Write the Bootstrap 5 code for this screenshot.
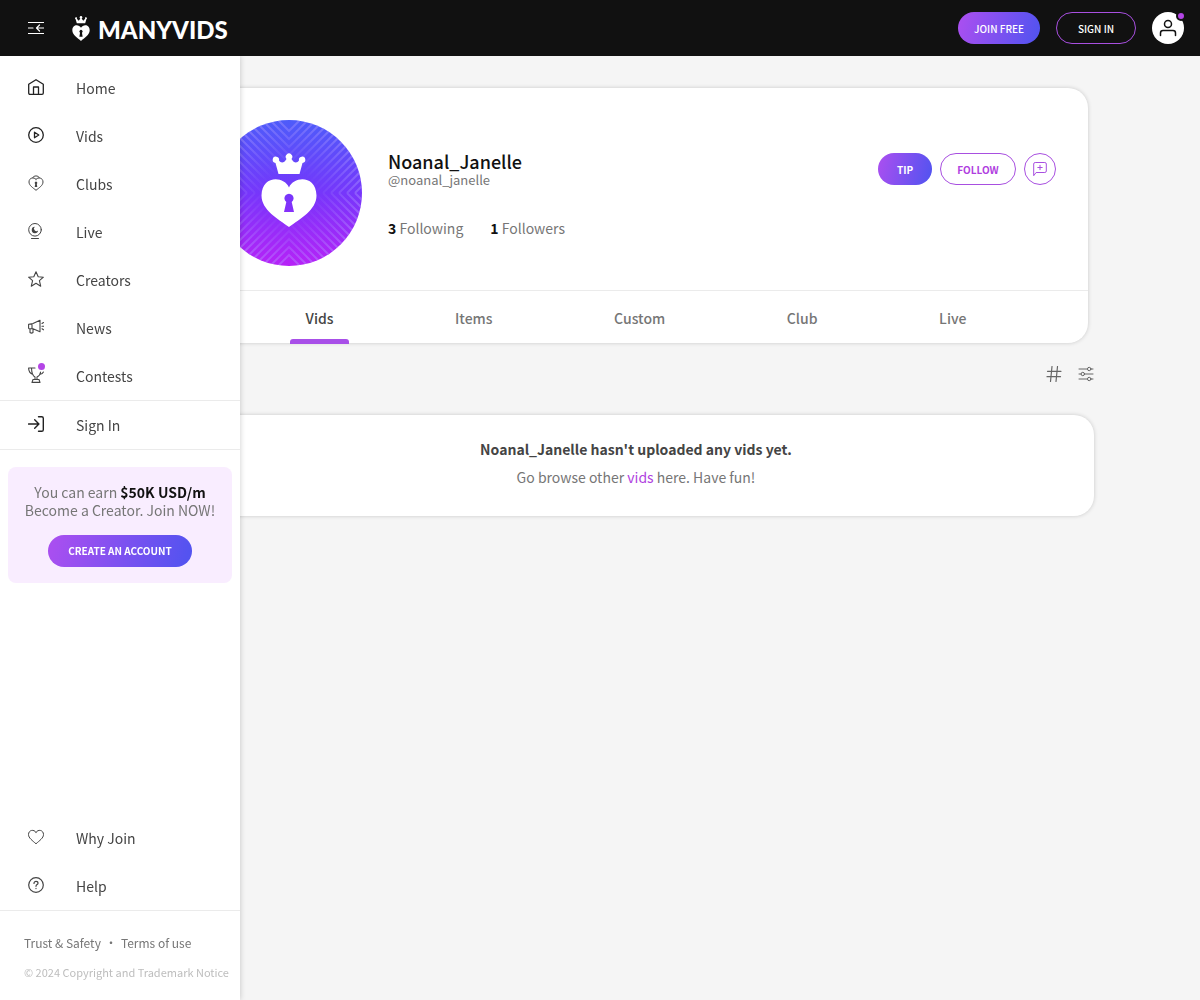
<!DOCTYPE html>
<html lang="en">
<head>
<meta charset="utf-8">
<meta name="viewport" content="width=device-width, initial-scale=1">
<title>Noanal_Janelle - ManyVids</title>
<link href="https://cdn.jsdelivr.net/npm/bootstrap@5.3.0/dist/css/bootstrap.min.css" rel="stylesheet">
<style>
  :root { --mv-purple: #a84fe8; --mv-line: #ebebeb; --mv-grad: linear-gradient(105deg, #a84ff0 5%, #5453f0 95%); }
  body { font-family: "Source Sans Pro", "Noto Sans CJK SC", sans-serif; font-size: 14px; line-height: 20px; color: #767676; background: #f5f5f5; }
  a { text-decoration: none; }
  svg { display: block; flex: none; }
  .line-icon { fill: none; stroke: currentColor; stroke-linecap: round; stroke-linejoin: round; }
  .top-bar { height: 56px; background: #111; z-index: 1040; }
  .menu-btn { margin: 0 20px 0 4px; }
  .brand-link { padding-top: 2px; }
  .brand-word { font: 900 24px/32px Lato, sans-serif; color: #fff; padding-top: 2px; }
  .pill { height: 32px; min-width: 76px; border-radius: 16px; border: 1px solid #a84fe0; font-size: 10px; line-height: 16px; font-weight: 500; padding: 2px 16px 0; }
  .pill-grad { background: var(--mv-grad); border: 0; color: #fff; }
  .pill-grad:hover { color: #fff; }
  .sign-btn { min-width: 80px; }
  .create-btn { min-width: 144px; font-weight: 700; padding-top: 0; }
  .tip-btn { min-width: 54px; }
  .user-btn { width: 32px; height: 32px; border-radius: 50%; background: #fff; color: #111; }
  .alert-dot { position: absolute; width: 7px; height: 7px; top: -4px; right: -1px; border-radius: 50%; background: #b445e6; }
  .user-btn .alert-dot { width: 10px; height: 10px; border: 2px solid #111; top: -1px; right: -2px; }
  .side-menu { position: fixed; top: 56px; bottom: 0; left: 0; width: 240px; background: #fff; box-shadow: 0 0 6px rgba(0,0,0,.2); z-index: 1030; }
  .side-link { height: 48px; padding: 0 28px; gap: 32px; color: #444; }
  .side-link svg { margin-bottom: 2px; }
  .rule-top { border-top: 1px solid var(--mv-line); }
  .rule-bottom { border-bottom: 1px solid var(--mv-line); }
  .promo { margin: 17px 8px 0; padding: 16px 8px; border-radius: 8px; background: #f9edff; line-height: 18px; }
  .promo strong { color: #111; }
  .legal { font-size: 12px; padding: 22px 0 18px 24px; }
  .legal a { color: #767676; }
  .legal .copyright { font-size: 11px; color: #bdbdbd; margin-top: 9px; white-space: nowrap; }
  .page-body { padding: 32px 0 32px 72px; }
  .page-col { max-width: 916px; margin: 0 auto; }
  .panel { background: #fff; border-radius: 20px; box-shadow: 0 0 4px rgba(0,0,0,.18); }
  .profile { margin: 0 6px; }
  .profile-head { padding: 32px 32px 24px; gap: 26px; }
  .info-text { padding-top: 31px; }
  .actions { padding-top: 33px; }
  .profile-name { font-size: 18px; line-height: 20px; font-weight: 500; color: #111; margin: 0; }
  .handle { line-height: 18px; font-size: 13px; }
  .stats { gap: 27px; margin-top: 29px; }
  .stats b { color: #111; font-weight: 700; }
  .tab-link { padding: 17px 0 15px; color: #767676; font-weight: 500; }
  .tab-link.current { color: #444; position: relative; }
  .tab-link.current::after { content: ""; position: absolute; left: -16px; right: -16px; bottom: -1px; height: 5px; border-radius: 3px 3px 0 0; background: var(--mv-purple); }
  .tools { padding: 23px 0 33px; gap: 16px; }
  .tools button { color: #666; background: none; }
  .round-btn { width: 32px; height: 32px; border-radius: 50%; border: 1px solid #a84fe0; color: #a84fe0; }
  .empty-note { padding: 24px 16px 29px; }
  .empty-note h2 { font-size: 14px; line-height: 20px; font-weight: 700; color: #444; margin: 0 0 8px; }
  .empty-note a, .follow { color: #b03fe0; }
</style>
</head>
<body>
<header class="top-bar sticky-top d-flex align-items-center justify-content-between px-3">
  <div class="d-flex align-items-center">
    <button class="btn border-0 text-white menu-btn py-0 px-2" aria-label="Toggle menu">
      <svg width="16" height="16" viewBox="0 0 16 16" class="line-icon" stroke-width="1.2"><path d="M0 2.5h16M0 13.500h16M0 8h5M9 8h7M11.500 5 8.500 8l3 3"/></svg>
    </button>
    <a href="#" class="brand-link d-flex align-items-center" aria-label="ManyVids">
      <svg width="18" height="26" viewBox="0 0 56 76" fill="#fff"><path d="M15 20 11 7a3 3 0 1 1 4-1l6 6 5-7a4 4 0 1 1 4 0l5 7 6-6a3 3 0 1 1 4 1l-4 13z"/><path fill-rule="evenodd" d="M28 34C22 23 1 22 1 42c0 14 17 25 27 33 10-8 27-19 27-33 0-20-21-19-27-8zm-3 16a5 5 0 1 1 6 0l2 12H23z"/></svg>
      <span class="brand-word ms-2">MANYVIDS</span>
    </a>
  </div>
  <div class="d-flex align-items-center gap-3">
    <button class="btn pill pill-grad">JOIN FREE</button>
    <button class="btn pill text-white sign-btn">SIGN IN</button>
    <button class="btn user-btn position-relative p-0 border-0 d-flex align-items-center justify-content-center" aria-label="Account">
      <svg width="18" height="18" viewBox="0 0 18 18" class="line-icon" stroke-width="1.500"><circle cx="9" cy="5" r="3.500"/><path d="M1.500 16.500v-2.500q0-2.500 2.500-2.500h10q2.500 0 2.500 2.500v2.500"/></svg>
      <span class="alert-dot"></span>
    </button>
  </div>
</header>

<nav class="side-menu d-flex flex-column" aria-label="Main">
  <div class="pt-2 rule-bottom">
    <a href="#" class="side-link d-flex align-items-center"><svg width="16" height="16" viewBox="0 0 16 16" class="line-icon" stroke-width="1.300" style="color:#222"><path d="M.7 5.300 8 .7l7.300 4.600v8.700q0 1.300-1.300 1.300H2Q.7 15.300.7 14zM5.500 15V8h5v7"/></svg>Home</a>
    <a href="#" class="side-link d-flex align-items-center"><svg width="16" height="16" viewBox="0 0 16 16" class="line-icon" style="color:#222" stroke-width="1.300"><circle cx="8" cy="8" r="7.300"/><path d="M6.500 5.200v5.600L10.800 8z"/></svg>Vids</a>
    <a href="#" class="side-link d-flex align-items-center"><svg width="16" height="16" viewBox="0 0 16 16" class="line-icon"><path d="M8 4.300C6 1.800 1 2.600 1 7c0 3.500 4 5.800 7 8.300 3-2.500 7-4.800 7-8.300 0-4.400-5-5.200-7-2.700zM4.800 2.500C5.500.3 10.500.3 11.200 2.500"/><path fill="currentColor" stroke="none" d="M7.200 8.900a1.300 1.300 0 1 1 1.600 0L9.300 12H6.700z"/></svg>Clubs</a>
    <a href="#" class="side-link d-flex align-items-center"><svg width="16" height="16" viewBox="0 0 16 16" class="line-icon"><circle cx="7" cy="6.800" r="6.300"/><path d="M3.500 15.500h7"/><path fill="currentColor" stroke="none" d="M6.800 3.800a3.200 3.200 0 1 0 3.300 3.700A1.900 1.900 0 0 1 6.800 3.800z"/></svg>Live</a>
    <a href="#" class="side-link d-flex align-items-center"><svg width="16" height="16" viewBox="0 0 16 16" class="line-icon" stroke-width="1.100"><path d="m8 .8 2.200 4.900 5.200.5-4 3.500 1.300 5.500L8 12.300l-4.700 2.900 1.300-5.500-4-3.500 5.200-.5z"/></svg>Creators</a>
    <a href="#" class="side-link d-flex align-items-center"><svg width="16" height="16" viewBox="0 0 16 16" class="line-icon" stroke-width="1.100"><path d="M.6 5.200 5 4.500l7-3.300v11.600L5 9.800H1.200Q.6 9.500.6 9zM4 4.700v5M2 10v3.500q1.500 1.200 3 0V10M14 4.500l1.500-1M14 7.200h1.800M14 9.800l1.500 1"/></svg>News</a>
    <a href="#" class="side-link d-flex align-items-center"><span class="position-relative"><svg width="16" height="16" viewBox="0 0 16 16" class="line-icon" stroke-width="1.100"><path d="M7 1H3.500q.2 7.500 3.500 9v2.500h2V10q3.200-1.500 3.600-5M3.500 1H.6q0 5 4.400 6.500M15.400 5q-.8 2-3.800 2.500M5 12.500h6l1 2.900H4z"/></svg><span class="alert-dot"></span></span>Contests</a>
  </div>
  <div class="rule-bottom">
    <a href="#" class="side-link d-flex align-items-center"><svg width="16" height="16" viewBox="0 0 16 16" class="line-icon" style="color:#222" stroke-width="1.400"><path d="M.6 8h10M6.700 3.800 10.900 8l-4.200 4.200M10.500.7h3.200q1.600 0 1.600 1.600v11.400q0 1.600-1.600 1.600h-3.200"/></svg>Sign In</a>
  </div>
  <div class="promo text-center">
    You can earn <strong>$50K USD/m</strong><br>Become a Creator. Join NOW!
    <div class="mt-3"><button class="btn pill pill-grad create-btn">CREATE AN ACCOUNT</button></div>
  </div>
  <div class="mt-auto rule-bottom">
    <a href="#" class="side-link d-flex align-items-center"><svg width="16" height="16" viewBox="0 0 16 16" class="line-icon"><path d="M8 3.300C6-.1 .5.900.5 5.600.5 9 4.500 11.600 8 14.800c3.500-3.200 7.500-5.800 7.500-9.200C15.500.9 10-.1 8 3.300z"/></svg>Why Join</a>
    <a href="#" class="side-link d-flex align-items-center"><svg width="16" height="16" viewBox="0 0 16 16" class="line-icon" stroke-width="1.200"><circle cx="8" cy="8" r="7.300"/><path d="M6 6.400c0-2.700 4-2.500 4-.2C10 7.700 8 7.500 8 9.300M8 11.400v.2"/></svg>Help</a>
  </div>
  <footer class="legal">
    <div class="d-flex gap-1"><a href="#">Trust &amp; Safety</a><span>•</span><a href="#">Terms of use</a></div>
    <div class="copyright">© 2024 Copyright and Trademark Notice</div>
  </footer>
</nav>

<main class="page-body">
  <div class="page-col">
    <section class="panel profile">
      <div class="profile-head d-flex">
        <svg width="146" height="146" viewBox="0 0 146 146" role="img" aria-label="Profile picture">
          <defs>
            <linearGradient id="sky" x1="0" y1="0" x2="0" y2="1"><stop offset="0" stop-color="#4d5cfa"/><stop offset=".5" stop-color="#7636fb"/><stop offset="1" stop-color="#b722f7"/></linearGradient>
            <radialGradient id="fade"><stop offset=".3" stop-color="#000"/><stop offset="1" stop-color="#fff"/></radialGradient>
            <mask id="rim"><rect width="146" height="146" fill="url(#fade)"/></mask>
            <clipPath id="disc"><circle cx="73" cy="73" r="73"/></clipPath>
            <clipPath id="quarter"><path d="M0 0h73v73H0z"/></clipPath>
            <g id="rays" clip-path="url(#quarter)"><path d="M-66 0 7 73M-58 0l73 73M-50 0l73 73M-42 0l73 73M-34 0l73 73M-26 0l73 73M-18 0l73 73M-10 0l73 73M-2 0l73 73M6 0l73 73M14 0l73 73M22 0l73 73M30 0l73 73M38 0l73 73M46 0l73 73M54 0l73 73M62 0l73 73" stroke="#b6a0ff" stroke-opacity=".4" stroke-width="2"/></g>
          </defs>
          <g clip-path="url(#disc)"><rect width="146" height="146" fill="url(#sky)"/>
            <g mask="url(#rim)"><use href="#rays"/><use href="#rays" transform="matrix(-1 0 0 1 146 0)"/><use href="#rays" transform="matrix(1 0 0 -1 0 146)"/><use href="#rays" transform="rotate(180 73 73)"/></g>
          </g>
          <g fill="#fff"><path d="m62.500 54-3-11a3.200 3.200 0 1 1 3.500-2.500c1.500 2.500 5 3.200 7.500-1.500a3.300 3.300 0 1 1 5 0c2.500 4.700 6 4 7.500 1.500A3.200 3.200 0 1 1 86.500 43l-3 11z"/><path fill-rule="evenodd" d="M73 67.500C68 56 46 55 45.500 75.500 45.500 90 62 99 73 107c11-8 27.500-17 27.500-31.500C100 55 78 56 73 67.500zM70.300 82a4.600 4.600 0 1 1 5.400 0l2.300 10H68z"/></g>
        </svg>
        <div class="flex-grow-1 d-flex justify-content-between">
          <div class="info-text">
            <h1 class="profile-name">Noanal_Janelle</h1>
            <div class="handle">@noanal_janelle</div>
            <div class="stats d-flex"><span><b>3</b> Following</span><span><b>1</b> Followers</span></div>
          </div>
          <div class="d-flex gap-2 actions">
            <button class="btn pill pill-grad tip-btn fw-bold">TIP</button>
            <button class="btn pill follow fw-bold">FOLLOW</button>
            <button class="btn round-btn p-0 d-flex align-items-center justify-content-center" aria-label="Send message"><svg width="14" height="14" viewBox="0 0 14 14" class="line-icon"><path d="M.7 13.300V2q0-1.500 1.500-1.500h9.600q1.500 0 1.500 1.500v7q0 1.500-1.500 1.500H3.500zM7 3.300v4.400M4.800 5.500h4.400"/></svg></button>
          </div>
        </div>
      </div>
      <nav class="d-flex justify-content-evenly rule-top" aria-label="Profile">
        <a href="#" class="tab-link current" aria-current="page">Vids</a><a href="#" class="tab-link">Items</a><a href="#" class="tab-link">Custom</a><a href="#" class="tab-link">Club</a><a href="#" class="tab-link">Live</a>
      </nav>
    </section>
    <div class="tools d-flex justify-content-end">
      <button class="btn p-0 border-0" aria-label="Tags"><svg width="16" height="16" viewBox="0 0 16 16" class="line-icon" stroke-width="1.200"><path d="M1.500 5.300h13.500M1 10.700h13.500M6 .5l-1.500 15M11.500.5l-1.500 15"/></svg></button>
      <button class="btn p-0 border-0" aria-label="Filters"><svg width="16" height="16" viewBox="0 0 16 16" class="line-icon"><path d="M1 3h8.500M13 3h2M1 8h2M6.500 8H15M1 13h8.500M13 13h2"/><circle cx="11.200" cy="3" r="1.700"/><circle cx="4.800" cy="8" r="1.700"/><circle cx="11.200" cy="13" r="1.700"/></svg></button>
    </div>
    <section class="panel empty-note text-center">
      <h2>Noanal_Janelle hasn't uploaded any vids yet.</h2>
      <div>Go browse other <a href="#">vids</a> here. Have fun!</div>
    </section>
  </div>
</main>
<script src="https://cdn.jsdelivr.net/npm/bootstrap@5.3.0/dist/js/bootstrap.bundle.min.js"></script>
</body>
</html>
